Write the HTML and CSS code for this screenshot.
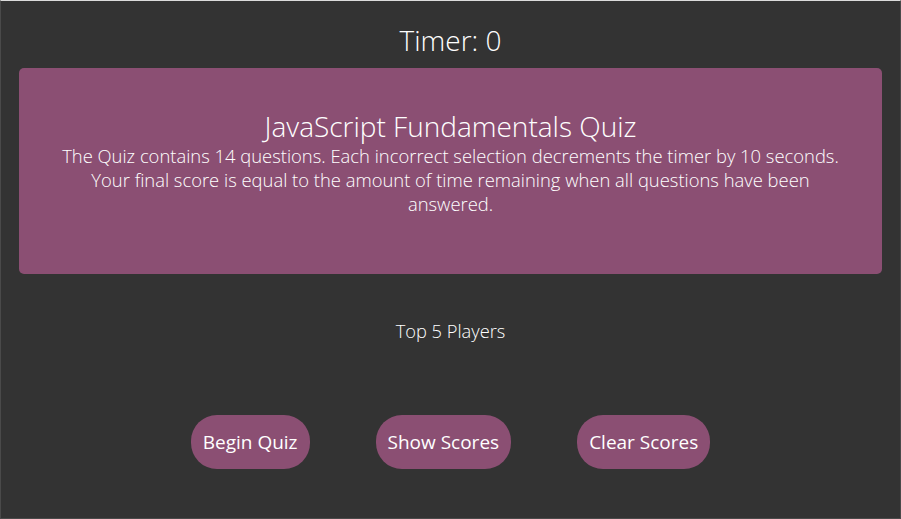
FILE: index.html
```html
<!DOCTYPE html>
<html lang="en">
<head>
<meta charset="utf-8">
<title>JavaScript Fundamentals Quiz</title>
<link rel="stylesheet" href="styles.css">
</head>
<body>
<main class="page">
  <h2 class="timer">Timer: 0</h2>
  <section class="card">
    <h1 class="card-title">JavaScript Fundamentals Quiz</h1>
    <p class="card-text">The Quiz contains 14 questions. Each incorrect selection decrements the timer by 10 seconds. Your final score is equal to the amount of time remaining when all questions have been answered.</p>
  </section>
  <h3 class="players">Top 5 Players</h3>
  <div class="actions">
    <button class="btn">Begin Quiz</button>
    <button class="btn">Show Scores</button>
    <button class="btn">Clear Scores</button>
  </div>
</main>
</body>
</html>
```
FILE: styles.css
```css
html, body {
  margin: 0;
  padding: 0;
  height: 100%;
}
body {
  background: #333333;
  font-family: "Open Sans", "Noto Sans", sans-serif;
  color: #ffffff;
}
.page {
  box-sizing: border-box;
  height: 100%;
  border-top: 1px solid #dcdcdc;
  border-left: 1px solid #4a4a4a;
  border-right: 1px solid #4a4a4a;
  border-bottom: 1px solid #4a4a4a;
  padding: 23px 18px 0 18px;
  display: flex;
  flex-direction: column;
}
.timer {
  margin: 0 0 12px 0;
  font-size: 28px;
  font-weight: 300;
  line-height: 32px;
  text-align: center;
}
.card {
  background: #8b4f73;
  border-radius: 5px;
  padding: 42px 40px 0 40px;
  height: 206px;
  box-sizing: border-box;
  text-align: center;
}
.card-title {
  margin: 0 0 2px 0;
  font-size: 28px;
  font-weight: 300;
  line-height: 32px;
}
.card-text {
  margin: 0;
  font-size: 18.4px;
  font-weight: 300;
  line-height: 24px;
}
.players {
  margin: 45px 0 0 0;
  font-size: 18.3px;
  font-weight: 300;
  line-height: 24px;
  text-align: center;
}
.actions {
  margin-top: 72px;
  display: flex;
  justify-content: center;
  gap: 66px;
}
.btn {
  height: 54px;
  padding: 0 12px;
  border: none;
  border-radius: 26px;
  background: #8b4f73;
  color: #ffffff;
  font-family: "Open Sans", "Noto Sans", sans-serif;
  font-size: 19px;
  font-weight: 400;
}
```
